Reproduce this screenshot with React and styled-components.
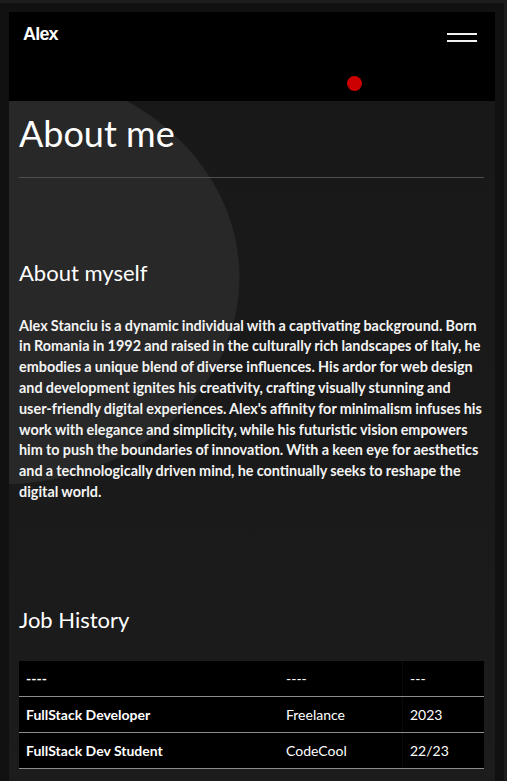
import React from "react";
import styled, { createGlobalStyle } from "styled-components";

const jobs = [
    { title: "----", place: "----", year: "---" },
    { title: "FullStack Developer", place: "Freelance", year: "2023" },
    { title: "FullStack Dev Student", place: "CodeCool", year: "22/23" },
];

const GlobalStyle = createGlobalStyle`
    html, body {
        margin: 0;
        padding: 0;
        background: #1d1d1d;
    }
    body {
        font-family: "Lato", "Liberation Sans", sans-serif;
        color: #fff;
    }
`;

const App = () => {
    return (
        <>
            <GlobalStyle />
            <Frame>
                <Header>
                    <Logo>Alex</Logo>
                    <MenuButton aria-label="menu">
                        <span />
                        <span />
                    </MenuButton>
                    <Dot />
                </Header>
                <Content>
                    <Title>About me</Title>
                    <Divider />
                    <SubTitle>About myself</SubTitle>
                    <Bio>
                        Alex Stanciu is a dynamic individual with a captivating background. Born in Romania
                        in 1992 and raised in the culturally rich landscapes of Italy, he embodies a unique
                        blend of diverse influences. His ardor for web design and development ignites his
                        creativity, crafting visually stunning and user-friendly digital experiences. Alex's
                        affinity for minimalism infuses his work with elegance and simplicity, while his
                        futuristic vision empowers him to push the boundaries of innovation. With a keen eye
                        for aesthetics and a technologically driven mind, he continually seeks to reshape the
                        digital world.
                    </Bio>
                    <SubTitle $gap="104px">Job History</SubTitle>
                    <JobTable>
                        <tbody>
                            {jobs.map((job, i) => (
                                <tr key={i}>
                                    <Cell $bold>{job.title}</Cell>
                                    <Cell>{job.place}</Cell>
                                    <Cell $divider>{job.year}</Cell>
                                </tr>
                            ))}
                        </tbody>
                    </JobTable>
                </Content>
            </Frame>
        </>
    );
};

const Frame = styled.div`
    margin: 3px 3px 0 0;
    padding: 9px 9px 0;
    background: #111;
    min-height: 100vh;
`;

const Header = styled.header`
    position: relative;
    display: flex;
    justify-content: space-between;
    align-items: flex-start;
    height: 89px;
    padding: 0 18px 0 14px;
    background: #000;
`;

const Logo = styled.div`
    padding-top: 13px;
    font-family: "Liberation Sans", Arial, sans-serif;
    font-size: 18px;
    line-height: 18px;
    font-weight: 700;
    letter-spacing: -0.8px;
    color: #fff;
`;

const MenuButton = styled.button`
    display: flex;
    flex-direction: column;
    gap: 5px;
    margin-top: 21px;
    padding: 0;
    border: none;
    background: none;
    cursor: pointer;

    span {
        display: block;
        width: 30px;
        height: 2px;
        background: #f2f2f2;
    }
`;

const Dot = styled.span`
    position: absolute;
    left: 338px;
    top: 64px;
    width: 15px;
    height: 15px;
    border-radius: 50%;
    background: #cc0000;
`;

const Content = styled.main`
    padding: 11px 11px 12px 10px;
    background:
        radial-gradient(ellipse 240px 208px at -9px 176px, #282828 99.4%, transparent 100%),
        linear-gradient(180deg, #181818 0%, #1c1c1c 100%);
`;

const Title = styled.h1`
    margin: 0;
    font-family: "Lato", sans-serif;
    font-size: 36px;
    line-height: 1.2;
    font-weight: 400;
    color: #fff;
`;

const Divider = styled.hr`
    margin: 22px 0 0;
    border: none;
    border-top: 1px solid #4e4e4e;
`;

const SubTitle = styled.h2`
    margin: ${({ $gap }) => $gap || "82px"} 0 0;
    font-family: "Lato", sans-serif;
    font-size: 22px;
    line-height: 1.2;
    font-weight: 400;
    color: #fff;
`;

const Bio = styled.p`
    margin: 29px -2px 0 0;
    font-family: "Lato", sans-serif;
    font-size: 14.4px;
    line-height: 20.8px;
    font-weight: 700;
    word-spacing: -0.3px;
    color: #f4f4f4;
`;

const JobTable = styled.table`
    width: 100%;
    margin-top: 28px;
    border-collapse: collapse;
    background: #000;
`;

const Cell = styled.td`
    height: 35px;
    padding: 0 7px;
    border-bottom: 1px solid #8c8c8c;
    border-left: ${({ $divider }) => ($divider ? "1px solid #0b0b0b" : "none")};
    font-family: "Lato", sans-serif;
    font-size: 14px;
    line-height: 20px;
    font-weight: ${({ $bold }) => ($bold ? 700 : 400)};
    color: #fff;

    &:first-child {
        width: 246px;
    }
    &:nth-child(2) {
        width: 109px;
    }
`;

export default App;
